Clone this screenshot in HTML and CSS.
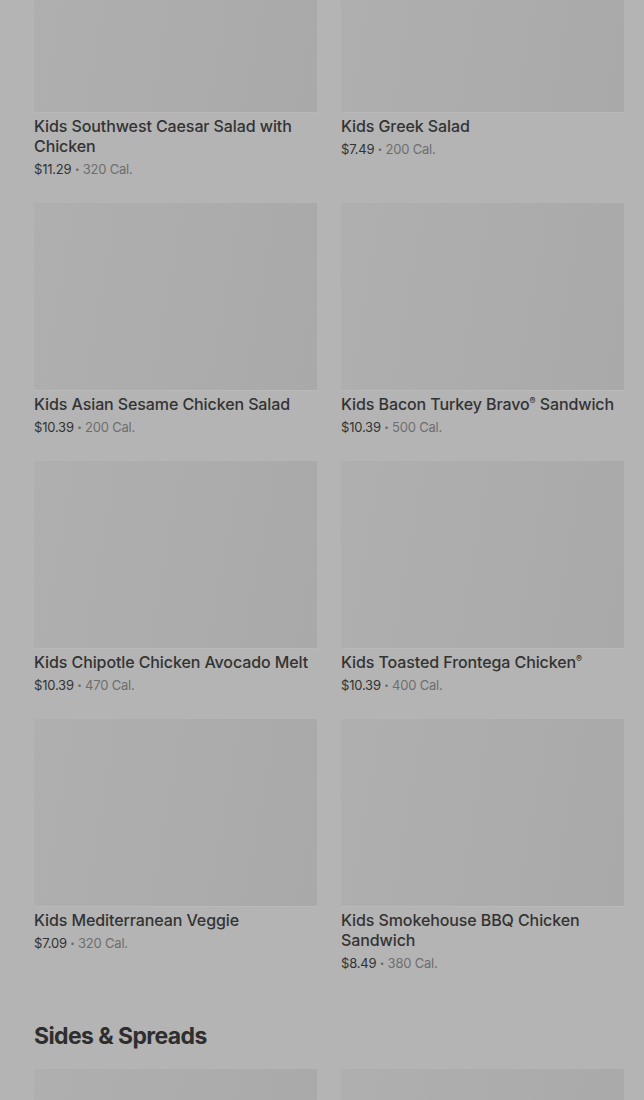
FILE: index.html
```html
<!DOCTYPE html>
<html lang="en">
<head>
    <meta charset="UTF-8">
    <meta name="viewport" content="width=device-width, initial-scale=1.0">
    <title>Menu</title>
    <link rel="stylesheet" href="styles.css">
</head>
<body>
    <div class="page">
        <div class="menu-grid">
            <div class="item">
                <div class="thumb"></div>
                <div class="name">Kids Southwest Caesar Salad with Chicken</div>
                <div class="meta">$11.29 <span class="dot">•</span> <span class="cal">320 Cal.</span></div>
            </div>
            <div class="item">
                <div class="thumb"></div>
                <div class="name">Kids Greek Salad</div>
                <div class="meta">$7.49 <span class="dot">•</span> <span class="cal">200 Cal.</span></div>
            </div>
            <div class="item">
                <div class="thumb"></div>
                <div class="name">Kids Asian Sesame Chicken Salad</div>
                <div class="meta">$10.39 <span class="dot">•</span> <span class="cal">200 Cal.</span></div>
            </div>
            <div class="item">
                <div class="thumb"></div>
                <div class="name">Kids Bacon Turkey Bravo<sup class="reg">®</sup> Sandwich</div>
                <div class="meta">$10.39 <span class="dot">•</span> <span class="cal">500 Cal.</span></div>
            </div>
            <div class="item">
                <div class="thumb"></div>
                <div class="name">Kids Chipotle Chicken Avocado Melt</div>
                <div class="meta">$10.39 <span class="dot">•</span> <span class="cal">470 Cal.</span></div>
            </div>
            <div class="item">
                <div class="thumb"></div>
                <div class="name">Kids Toasted Frontega Chicken<sup class="reg">®</sup></div>
                <div class="meta">$10.39 <span class="dot">•</span> <span class="cal">400 Cal.</span></div>
            </div>
            <div class="item">
                <div class="thumb"></div>
                <div class="name">Kids Mediterranean Veggie</div>
                <div class="meta">$7.09 <span class="dot">•</span> <span class="cal">320 Cal.</span></div>
            </div>
            <div class="item">
                <div class="thumb"></div>
                <div class="name">Kids Smokehouse BBQ Chicken Sandwich</div>
                <div class="meta">$8.49 <span class="dot">•</span> <span class="cal">380 Cal.</span></div>
            </div>
        </div>

        <h2 class="section-title">Sides &amp; Spreads</h2>

        <div class="menu-grid">
            <div class="item">
                <div class="thumb"></div>
            </div>
            <div class="item">
                <div class="thumb"></div>
            </div>
        </div>
    </div>
</body>
</html>
```

FILE: styles.css
```css
body {
    margin: 0;
    background-color: #b4b4b4;
    font-family: Inter, Roboto, "Liberation Sans", sans-serif;
    color: #333;
    overflow: hidden;
}
.page {
    padding: 0 20px 0 34px;
    margin-top: -75px;
}
.menu-grid {
    display: grid;
    grid-template-columns: repeat(2, 1fr);
    column-gap: 24px;
    row-gap: 24px;
}
.thumb {
    height: 188px;
    background: linear-gradient(100deg, #afafaf 0%, #acacac 55%, #a9a9a9 100%);
    border-bottom: 1px solid #b9b9b9;
    box-sizing: border-box;
}
.name {
    margin-top: 3px;
    font-size: 16px;
    line-height: 20px;
    font-weight: 500;
    letter-spacing: -0.1px;
    color: #333;
}
.reg {
    font-size: 9px;
    line-height: 0;
    vertical-align: 6px;
}
.meta {
    margin-top: 4px;
    font-size: 13px;
    line-height: 19px;
    letter-spacing: -0.2px;
    color: #333;
}
.dot {
    font-size: 8px;
    color: #6b6b6b;
    vertical-align: 2px;
}
.cal {
    color: #6e6e6e;
}
.section-title {
    margin: 49px 0 19px;
    font-size: 23px;
    line-height: 28px;
    font-weight: 700;
    letter-spacing: -0.6px;
    color: #2e2e2e;
}
```
